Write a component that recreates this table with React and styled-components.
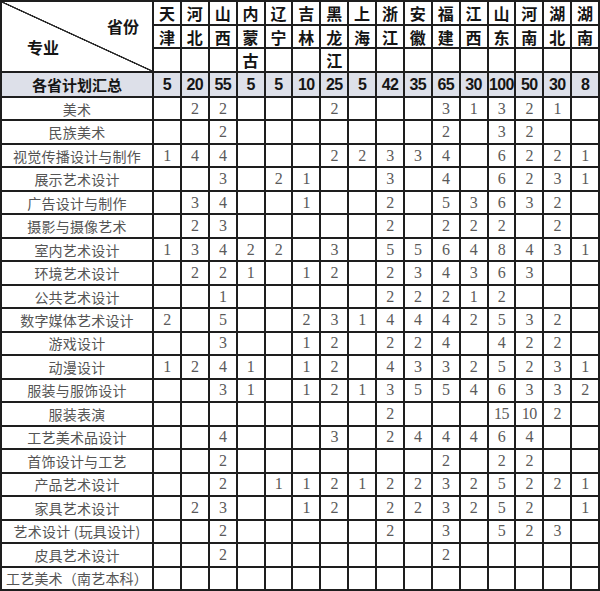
import React from 'react'
import styled, {createGlobalStyle} from "styled-components";

const provinces = [
    ["天", "津", ""], ["河", "北", ""], ["山", "西", ""], ["内", "蒙", "古"],
    ["辽", "宁", ""], ["吉", "林", ""], ["黑", "龙", "江"], ["上", "海", ""],
    ["浙", "江", ""], ["安", "徽", ""], ["福", "建", ""], ["江", "西", ""],
    ["山", "东", ""], ["河", "南", ""], ["湖", "北", ""], ["湖", "南", ""],
]

const totals = [5, 20, 55, 5, 5, 10, 25, 5, 42, 35, 65, 30, 100, 50, 30, 8]

// empty string = no plan for that province
const majors = [
    ["美术", ["", 2, 2, "", "", "", 2, "", "", "", 3, 1, 3, 2, 1, ""]],
    ["民族美术", ["", "", 2, "", "", "", "", "", "", "", 2, "", 3, 2, "", ""]],
    ["视觉传播设计与制作", [1, 4, 4, "", "", "", 2, 2, 3, 3, 4, "", 6, 2, 2, 1]],
    ["展示艺术设计", ["", "", 3, "", 2, 1, "", "", 3, "", 4, "", 6, 2, 3, 1]],
    ["广告设计与制作", ["", 3, 4, "", "", 1, "", "", 2, "", 5, 3, 6, 3, 2, ""]],
    ["摄影与摄像艺术", ["", 2, 3, "", "", "", "", "", 2, "", 2, 2, 2, "", 2, ""]],
    ["室内艺术设计", [1, 3, 4, 2, 2, "", 3, "", 5, 5, 6, 4, 8, 4, 3, 1]],
    ["环境艺术设计", ["", 2, 2, 1, "", 1, 2, "", 2, 3, 4, 3, 6, 3, "", ""]],
    ["公共艺术设计", ["", "", 1, "", "", "", "", "", 2, 2, 2, 1, 2, "", "", ""]],
    ["数字媒体艺术设计", [2, "", 5, "", "", 2, 3, 1, 4, 4, 4, 2, 5, 3, 2, ""]],
    ["游戏设计", ["", "", 3, "", "", 1, 2, "", 2, 2, 4, "", 4, 2, 2, ""]],
    ["动漫设计", [1, 2, 4, 1, "", 1, 2, "", 4, 3, 3, 2, 5, 2, 3, 1]],
    ["服装与服饰设计", ["", "", 3, 1, "", 1, 2, 1, 3, 5, 5, 4, 6, 3, 3, 2]],
    ["服装表演", ["", "", "", "", "", "", "", "", 2, "", "", "", 15, 10, 2, ""]],
    ["工艺美术品设计", ["", "", 4, "", "", "", 3, "", 2, 4, 4, 4, 6, 4, "", ""]],
    ["首饰设计与工艺", ["", "", 2, "", "", "", "", "", "", "", 2, "", 2, 2, "", ""]],
    ["产品艺术设计", ["", "", 2, "", 1, 1, 2, 1, 2, 2, 3, 2, 5, 2, 2, 1]],
    ["家具艺术设计", ["", 2, 3, "", "", 1, 2, "", 2, 2, 3, 2, 5, 2, "", 1]],
    ["艺术设计 (玩具设计)", ["", "", 2, "", "", "", "", "", 2, "", 3, "", 5, 2, 3, ""]],
    ["皮具艺术设计", ["", "", 2, "", "", "", "", "", "", "", 2, "", "", "", "", ""]],
    ["工艺美术（南艺本科）", ["", "", "", "", "", "", "", "", "", "", "", "", "", "", "", ""]],
]

const App = () => {

    return (
        <>
            <GlobalStyle/>
            <Sheet>
                <Corner>
                    <CornerLabel $side="right">省份</CornerLabel>
                    <CornerLabel $side="left">专业</CornerLabel>
                </Corner>

                {[0, 1, 2].map((line) =>
                    provinces.map((p, i) => (
                        <HeadCell key={`h${line}-${i}`}>{p[line]}</HeadCell>
                    ))
                )}

                <SumLabel>各省计划汇总</SumLabel>
                {totals.map((t, i) => (
                    <SumCell key={`t${i}`}>{t}</SumCell>
                ))}

                {majors.map(([name, nums]) => (
                    <React.Fragment key={name}>
                        <MajorCell>{name}</MajorCell>
                        {nums.map((n, i) => (
                            <NumCell key={i}>{n}</NumCell>
                        ))}
                    </React.Fragment>
                ))}
            </Sheet>
        </>
    );
};

const GlobalStyle = createGlobalStyle`
  html, body {
    margin: 0;
    padding: 0;
    background: #ffffff;
  }
  body {
    font-family: "Noto Sans CJK SC", "Noto Sans", sans-serif;
  }
`;

const Sheet = styled.div`
  width: 600px;
  height: 591px;
  box-sizing: border-box;
  padding: 2px;
  display: grid;
  grid-template-columns: 150px repeat(16, 1fr);
  grid-template-rows: 22px 21px 22px 23px repeat(21, 1fr);
  gap: 2px;
  background-color: #1e1e1e;
`;

const Cell = styled.div`
  background-color: #ffffff;
  display: flex;
  align-items: center;
  justify-content: center;
  white-space: nowrap;
  line-height: 1;
  min-width: 0;
`;

const Corner = styled.div`
  grid-row: 1 / span 3;
  display: flex;
  flex-direction: column;
  background: linear-gradient(to top right, #ffffff calc(50% - 1px), #2a2a2a calc(50% - 0.5px), #2a2a2a calc(50% + 0.5px), #ffffff calc(50% + 1px));
`;

const CornerLabel = styled.span`
  font-size: 16px;
  font-weight: 700;
  line-height: 18px;
  color: #151515;
  align-self: ${(p) => (p.$side === "right" ? "flex-end" : "flex-start")};
  margin: ${(p) => (p.$side === "right" ? "15px 13px 0 0" : "3px 0 0 25px")};
`;

const HeadCell = styled(Cell)`
  font-size: 16px;
  font-weight: 700;
  color: #151515;
`;

const SumLabel = styled(Cell)`
  background-color: #dde0e9;
  font-size: 15px;
  font-weight: 700;
  color: #151515;
`;

const SumCell = styled(Cell)`
  background-color: #dde0e9;
  font-family: "Liberation Sans", Arial, sans-serif;
  font-size: 16px;
  font-weight: 700;
  color: #151515;
  letter-spacing: -0.6px;
`;

const MajorCell = styled(Cell)`
  font-size: 14px;
  color: #555555;
  letter-spacing: 0.2px;
`;

const NumCell = styled(Cell)`
  font-family: "Liberation Serif", "Times New Roman", serif;
  font-size: 16px;
  color: #5a5a5a;
  letter-spacing: -0.5px;
`;

export default App
